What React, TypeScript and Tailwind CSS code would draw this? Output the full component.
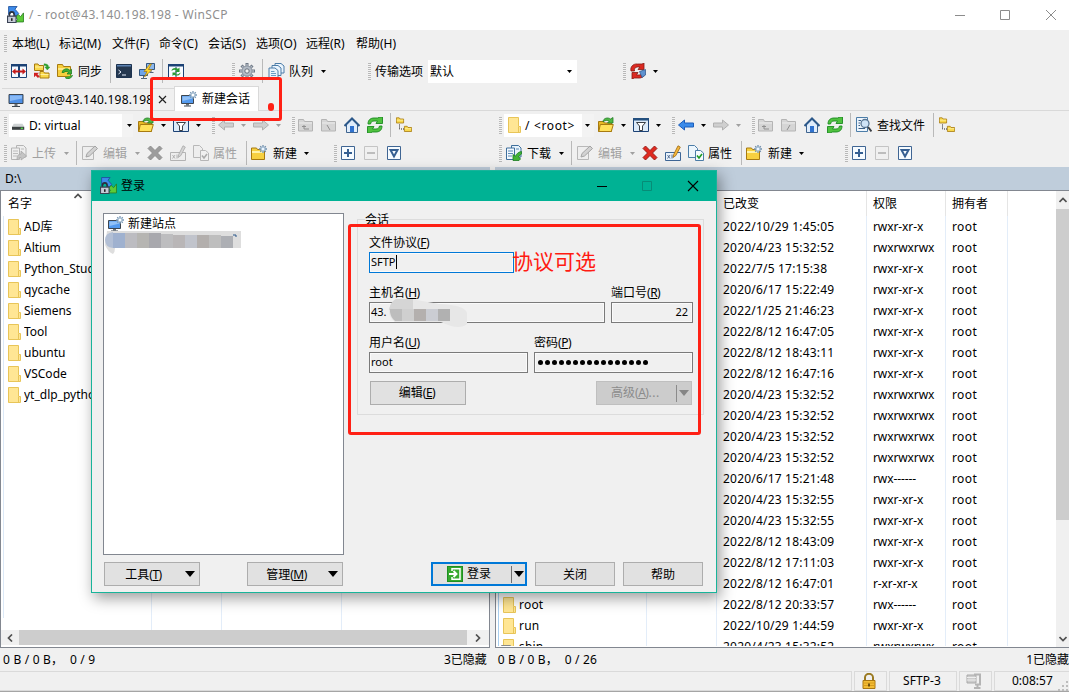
import React from 'react';

type P = { className?: string; children?: React.ReactNode };

const Svg = ({ children, className = '' }: P) => (
  <svg width="16" height="16" viewBox="0 0 16 16" fill="none" className={`shrink-0 ${className}`}>{children}</svg>
);

/* ---------- icons ---------- */
const AppIcon = () => (
  <Svg className="!h-[17px] !w-[17px]">
    <path d="M1.500 .5h8L7.500 3l3.500 4-2.500 2.500L5 5.500 1.500 8z" fill="#3d8bea" stroke="#1d4f9c" strokeWidth=".8" />
    <path d="M15.500 6.500v8.500H7.500l2.500-2.300L8 10.500 10.500 8l2.300 2z" fill="#5ccb37" stroke="#2b7f22" strokeWidth=".8" />
    <path d="M2.300 10V8a2.200 2.500 0 0 1 4.400 0v2" stroke="#2b313d" strokeWidth="1.500" />
    <path d="M.5 9.500h8v6h-8z" fill="#c5cad6" stroke="#3a4254" />
    <path d="M4.500 11.500v2.500" stroke="#222" strokeWidth="1.500" />
  </Svg>
);
const Panels = () => (
  <Svg><path d="M.5 1.500h7v13h-7zM8.500 1.500h7v13h-7z" fill="#f4f9ff" stroke="#1c4275" /><path d="M0 1h16v2.500H0z" fill="#1c4275" /><path d="M1 8.500l3.500-3v2h7v-2l3.500 3-3.500 3v-2h-7v2z" fill="#c41a1a" /></Svg>
);
const Fold = ({ x, y, s = 1 }: { x: number; y: number; s?: number }) => (
  <g transform={`translate(${x} ${y}) scale(${s})`}><path d="M.5 7.500v-6.500h3.500l1 1.500h4.500v5z" fill="#f9d84a" stroke="#a77a10" /><path d="M1 4h8" stroke="#fff0a0" /></g>
);
const SyncFolders = () => (
  <Svg><Fold x={0} y={0} /><Fold x={5.500} y={7.500} /><path d="M10 .8c3 0 4.500 1 4.500 3.200H16L13.300 7 10.800 4h1.600c0-1-.9-1.400-2.400-1.400z" fill="#2ea02e" stroke="#2ea02e" strokeWidth=".4" /><path d="M0 10h4.500L3.200 11.200l2.300 2-1.500 1.600-2.300-2.200L0 14z" fill="#d02020" stroke="#d02020" strokeWidth=".4" /></Svg>
);
const SyncBrowse = () => (
  <Svg><path d="M.5 13.500v-12h5l1 2h7v10z" fill="#f7cf3d" stroke="#a77a10" /><path d="M1 6h12" stroke="#fff0a0" strokeWidth="1.500" /><path d="M5 9.500a4.500 4.500 0 0 1 8-2l1.500-1.200V11h-4.500l1.500-1.500c-1.500-1.500-3.500-1.500-4.500 0zM15.500 12a4.500 4.500 0 0 1-7.500 2.500" fill="#3fae35" stroke="#1e7f22" strokeWidth=".8" /></Svg>
);
const Terminal = () => (
  <Svg><path d="M.5 1.500h15v13H.5z" fill="#253850" stroke="#1d3350" /><path d="M1 2h14v1.500H1z" fill="#5c82b2" /><path d="M2.500 7l2.500 2-2.500 2" stroke="#e9f1ff" /><path d="M6 12h4" stroke="#e9f1ff" /></Svg>
);
const Putty = () => (
  <Svg><path d="M7.500 .5h8v6h-8z" fill="#8bb7ee" stroke="#33577f" /><path d="M.5 6.500h8v6h-8z" fill="#6ca4ea" stroke="#33577f" /><path d="M4.500 13v2M2 15.500h6M12 7v2.500M10.500 9.500h4" stroke="#526579" /><path d="M11 1L5 8.500h3L5.500 14 13 6.500H9.500L12.500 1z" fill="#ffd62e" stroke="#a3770d" strokeWidth=".7" /></Svg>
);
const SyncWin = () => (
  <Svg><path d="M.5 1.500h15v14H.5z" fill="#f6faff" stroke="#1c4275" /><path d="M0 1h16v2.500H0z" fill="#1c4275" /><path d="M8 4v11" stroke="#1c4275" /><path d="M3.500 8c0-3 4-4 6.500-2.200L11.500 4.500v4.500H7l1.600-1.500C7 6.500 5.500 6.500 3.500 8zM12.500 9.500c0 3-4 4-6.500 2.200L4.500 13v-3.500H9L7.400 11c1.600 1 3 .5 5.100-1.500z" fill="#2a9a32" /></Svg>
);
const Gear = () => (
  <Svg><path d="M8 0v16M0 8h16M2.500 2.500l11 11M13.500 2.500l-11 11" stroke="#6f7986" strokeWidth="3" /><path d="M8 1v14M1 8h14M3.200 3.200l9.600 9.600M12.800 3.200l-9.600 9.600" stroke="#b4bcc6" strokeWidth="1.400" /><circle cx="8" cy="8" r="5" fill="#b4bcc6" stroke="#8e97a3" /><circle cx="8" cy="8" r="2.200" fill="#f0f0f0" stroke="#68717d" /></Svg>
);
const Queue = () => (
  <Svg className="!w-[17px]"><path d="M6.500.5h6l3 2.500v7h-9z" fill="#eaf4fd" stroke="#4c7da8" /><path d="M3.500 2.500h6l3 2.500v7.500h-9z" fill="#eaf4fd" stroke="#4c7da8" /><path d="M.5 5h6l3 2.500v8h-9z" fill="#e8f3fc" stroke="#4c7da8" /><path d="M2.500 8.500H6M2.500 10.500h5M2.500 12.500h5" stroke="#6a9cc4" /></Svg>
);
const RedSync = () => (
  <Svg><path d="M1 8C0 4 3 .5 7.500 1H12l2-1v6.500H8l2-2.500H7.500C5 4 4 6 4.500 8z" fill="#dc2a22" stroke="#851a14" strokeWidth=".8" /><path d="M14.500 9c.5 4-2.500 6.500-6.500 6H4.500L2 16V9.500h6L6.500 12H9c2 0 3-1 3-3z" fill="#dc2a22" stroke="#851a14" strokeWidth=".8" /><path d="M9.500 8.500l6-2v5.500l-3.500 2.500z" fill="#5d91cf" stroke="#294f84" strokeWidth=".7" /></Svg>
);
const Monitor = () => (
  <Svg><path d="M1 2.500h14v9H1z" fill="#4d8fe6" stroke="#3d4650" /><path d="M2 3.500h12v3L2 9z" fill="#88b9f6" /><path d="M6.500 12h3v2h-3z" fill="#687078" /><path d="M4 14.500h8" stroke="#3d4650" /></Svg>
);
const MonitorNew = () => (
  <Svg><path d="M.5 4.500h12v8H.5z" fill="#549aee" stroke="#3d4650" /><path d="M1.500 5.500h10v2L1.500 10z" fill="#91c1f7" /><path d="M5 13h3v1.500H5z" fill="#687078" /><path d="M3 15h7" stroke="#3d4650" /><path d="M12 0v8M8 4h8M9.200 1.200l5.600 5.600M14.800 1.200L9.200 6.800" stroke="#7a98b5" strokeWidth="1.300" /><circle cx="12" cy="4" r="2" fill="#fff" stroke="#9db8d0" /></Svg>
);
const Drive = () => (
  <Svg className="!w-[14px]"><path d="M2 6.500h10l2 3.500H0z" fill="#cfd3d4" /><path d="M0 10h14v3.500H0z" fill="#3b4041" /><path d="M10 11h2.500v1.500H10z" fill="#55e04a" /></Svg>
);
const OpenFolder = () => (
  <Svg><path d="M.5 14.500V4.500h5l1 1.500h7v8.500z" fill="#e8b923" stroke="#a77a10" /><path d="M.8 14.500l1.500-7h13l-2 7z" fill="#ffe15a" stroke="#a77a10" /><path d="M5 5C5 1 10 0 12.500 2L15 .5V6H9.500l1.700-1.700C9.500 3 7 3 5 5z" fill="#4fb844" stroke="#247d28" strokeWidth=".8" /></Svg>
);
const Filter = () => (
  <Svg><path d="M.5 1.500h15v13H.5z" fill="#dceaf8" stroke="#1c4275" /><path d="M0 1h16v2.500H0z" fill="#24507f" /><path d="M3.500 5.500h9L9.500 9v4.500h-3V9z" fill="#fff" stroke="#3a3f45" /></Svg>
);
const Arrow = ({ c, right = false }: { c: string; right?: boolean }) => (
  <Svg className={right ? 'rotate-180' : ''}><path d="M.5 8l6-5v3h9v4h-9v3z" fill={c} stroke={c === '#cfcfcf' ? '#b0b0b0' : '#1d5ebb'} /></Svg>
);
const GrayFolder = ({ d }: { d: string }) => (
  <Svg><path d="M.5 14V2.500h5l1 2h8V14z" fill="#d5d5d5" stroke="#b4b4b4" /><path d="M1 6h13" stroke="#ececec" /><path d={d} stroke="#8f8f8f" /></Svg>
);
const Home = () => (
  <Svg><path d="M2.500 7v8.500h11V7L8 2z" fill="#e0edfc" stroke="#3f648f" /><path d="M.5 9L8 1.500 15.500 9" stroke="#2c588a" strokeWidth="2" /><path d="M6 9h4v6H6z" fill="#2f72cf" /></Svg>
);
const Refresh = () => (
  <Svg><path d="M1 7C1 2.500 4 1 7 1h3.500L13 0h2.500v6.500H9L10.500 4H7C5 4 4 5 3.500 7zM15 9c0 4.500-3 6-6 6H5.500L3 16H.5V9.500H7L5.500 12H9c2 0 3-1 3.500-3z" fill="#4fc13f" stroke="#1c8a22" strokeWidth=".9" /></Svg>
);
const Tree = () => (
  <Svg><Fold x={0} y={0} s={0.8} /><Fold x={8} y={8.500} s={0.8} /><path d="M3.500 7.500V12H8" stroke="#222" strokeDasharray="1 1" /></Svg>
);
const Find = () => (
  <Svg><path d="M.5.5h11v14H.5z" fill="#edf5fd" stroke="#4c7da8" /><path d="M2.500 3.500H5M2.500 6H4M2.500 8.500H4M2.500 11.500H9" stroke="#3a5f88" /><circle cx="9" cy="6.500" r="4" fill="#cfe3f7" stroke="#5a7693" strokeWidth="1.300" /><path d="M12 10l3.500 4.500" stroke="#3b3f45" strokeWidth="2" /></Svg>
);
const Transfer = ({ on = false }: { on?: boolean }) => (
  <Svg><path d="M5.500.5h7l2.500 2.500v9H5.500z" fill={on ? '#e8f3fc' : '#eee'} stroke={on ? '#3e6f9c' : '#b4b4b4'} /><path d="M.5 3h8v11.500h-8z" fill={on ? '#f2f8fe' : '#eee'} stroke={on ? '#3e6f9c' : '#b4b4b4'} /><path d="M2 6h5M2 8.500h5M2 11h4M10 4h3" stroke={on ? '#5a8ab4' : '#bcbcbc'} /><path d={on ? 'M15.500 6.500v2.500l-3 2.500 2 2.500-1.500 1.500H7V9.500l2.300 1.800c1.200-2.500 3-4.300 6.200-4.800z' : 'M6 15c0-4 1-6 4-6V6l5.500 5-5.500 4v-2.500c-2 0-3 1-4 2.500z'} fill={on ? '#42b435' : '#c4c4c4'} stroke={on ? '#1b7e22' : '#a8a8a8'} strokeWidth=".8" /></Svg>
);
const Edit = () => (
  <Svg><path d="M.5 1.500h11v13H.5z" fill="#eee" stroke="#b8b8b8" /><path d="M4 12l1-3.500L13 1l2.500 2.500L7.500 11z" fill="#d2d2d2" stroke="#a4a4a4" /></Svg>
);
const Cross = ({ on = false }: { on?: boolean }) => (
  <Svg><path d="M1 3.500L3.500 1 8 5.500 12.500 1 15 3.500 10.500 8 15 12.500 12.500 15 8 10.500 3.500 15 1 12.500 5.500 8z" fill={on ? '#e02a20' : '#9c9c9c'} stroke={on ? '#8e1712' : '#8a8a8a'} strokeWidth=".9" /></Svg>
);
const Rename = ({ on = false }: { on?: boolean }) => (
  <Svg><path d="M.5 7.500h15v8H.5z" fill={on ? '#e8f2fc' : '#eee'} stroke={on ? '#3e6696' : '#b4b4b4'} /><path d="M2.500 10l2.500 3.500M5 10l-2.500 3.500M7 9.500v4" stroke={on ? '#3a5680' : '#a4a4a4'} strokeWidth=".8" /><path d="M8 12.500l.7-3L13 .8l2.300 1.300-4.500 8.500z" fill={on ? '#f6b93b' : '#d4d4d4'} stroke={on ? '#9b6712' : '#a8a8a8'} strokeWidth=".8" /></Svg>
);
const Props = ({ on = false }: { on?: boolean }) => (
  <Svg><path d="M.5.500h6l3 3v9h-9z" fill={on ? '#edf6fd' : '#eee'} stroke={on ? '#4c7da8' : '#b8b8b8'} /><path d="M7.500 5.500h5l3 2.500v7.500h-8z" fill={on ? '#f7fbff' : '#f0f0f0'} stroke={on ? '#4c7da8' : '#b8b8b8'} /><path d="M9 10.500l2 2.500 3-4" stroke={on ? '#1d9a25' : '#ababab'} strokeWidth="1.600" /></Svg>
);
const NewFolder = () => (
  <Svg><path d="M.5 14.500V3h5l1 1.500h7v10z" fill="#f7d040" stroke="#a77a10" /><path d="M1 7h12" stroke="#fff3a8" strokeWidth="2" /><path d="M12 0v8M8 4h8M9.200 1.200l5.600 5.600M14.800 1.200L9.200 6.800" stroke="#6f8ead" strokeWidth="1.300" /><circle cx="12" cy="4" r="2" fill="#eef7ff" stroke="#9db8d0" /></Svg>
);
const Box = ({ d, off = false }: { d: string; off?: boolean }) => (
  <svg width="14" height="14" viewBox="0 0 14 14" fill="none" className="shrink-0"><path d="M.5.500h13v13H.5z" fill={off ? '#f0f0f0' : '#f6fbff'} stroke={off ? '#c4c4c4' : '#3f6593'} /><path d={d} stroke={off ? '#bdbdbd' : '#355f92'} strokeWidth="2" /></svg>
);
const Folder = ({ link = false }: { link?: boolean }) => (
  <svg width="13" height="16" viewBox="0 0 13 16" className="shrink-0 overflow-visible"><path d="M.5.500h10v9h2v6H.5z" fill="#ffe694" stroke="#e8c558" /><path d="M10.500 10v5.500" stroke="#e8c558" />{link && <path d="M-1.500 6.500h9v9h-9z" fill="#fff" stroke="#8a8a8a" />}</svg>
);
const Padlock = () => (
  <svg width="14" height="16" viewBox="0 0 14 16" fill="none"><path d="M3 7.500V4.500a4 3.700 0 0 1 8 0v3" stroke="#9a7a22" strokeWidth="2" /><path d="M1 7.500h12v8H1z" fill="#f3bd35" stroke="#a87611" /><path d="M1.500 10h11M1.500 12.500h11" stroke="#d99c1c" /><path d="M7 10.500v3" stroke="#4b3505" strokeWidth="1.500" /></svg>
);
const Clamp = () => (
  <Svg><path d="M1 2h9v8H1z" fill="#ccc" stroke="#aaa" /><path d="M1 4.500h9M1 7h9" stroke="#eee" /><path d="M8 1.500h6v10H9M11.500 11v3.500M8 15h6.500" stroke="#b4b4b4" strokeWidth="2" /></Svg>
);
const LoginIcon = () => (
  <Svg><path d="M0 0h16v16H0z" fill="#1e8f22" /><path d="M1 1h14v14H1z" fill="#37a92e" /><path d="M5 5V2.800h8v10.400H5V11" stroke="#fff" strokeWidth="1.500" /><path d="M2 8h7M6.500 5L9.500 8l-3 3" stroke="#fff" strokeWidth="1.900" /></Svg>
);

/* ---------- small parts ---------- */
const C = ({ className = '', children }: P) => <span className={`flex h-full shrink-0 items-center whitespace-nowrap ${className}`}>{children}</span>;
const Grip = ({ className = '' }: P) => (
  <C className={className}><span className="h-[17px] w-[3px] bg-[repeating-linear-gradient(#b8b8b8_0px,#b8b8b8_1px,#f4f4f4_1px,#f4f4f4_2px)]" /></C>
);
const Sep = ({ className = '' }: P) => <C className={className}><span className="h-[24px] w-px bg-[#b9b9b9]" /></C>;
const Caret = ({ className = '', off = false }: { className?: string; off?: boolean }) => (
  <C className={className}><svg width="5" height="3" viewBox="0 0 5 3"><path d="M0 0h5L2.500 3z" fill={off ? '#a0a0a0' : '#000'} /></svg></C>
);
const Chevron = ({ className = '' }: P) => (
  <svg width="8" height="6" viewBox="0 0 8 6" fill="none" className={`shrink-0 ${className}`}><path d="M.5 5L4 1.500 7.500 5" stroke="#505050" strokeWidth="1.700" /></svg>
);

const NavBar = ({ remote = false }: { remote?: boolean }) => (
  <div className={`flex h-7 items-center pl-1 ${remote ? 'w-[574px]' : 'w-[495px]'}`}>
    <Grip className="w-[5px]" />
    {remote ? (
      <C className="!h-[23px] mr-[4px] w-[90px] bg-white">
        <C className="w-[21px] pl-1"><Folder /></C>
        <C className="w-[57px] pt-px tracking-[0.65px]">/ &lt;root&gt;</C>
        <Caret className="w-[12px] bg-[#f3f3f3] pl-[3px]" />
      </C>
    ) : (
      <C className="!h-[23px] mr-[5px] w-[124px] bg-white">
        <C className="w-[20px] pl-[3px]"><Drive /></C>
        <C className="w-[93px] pt-px tracking-[0.1px]">D: virtual</C>
        <Caret className="w-[11px] bg-[#f3f3f3] pl-[5px]" />
      </C>
    )}
    <C className="w-[23px]"><OpenFolder /></C>
    <Caret className="w-[12px]" />
    <C className="w-[23px]"><Filter /></C>
    <Caret className="w-[16px]" />
    <Grip className="w-[6px]" />
    <C className="w-[23px]"><Arrow c={remote ? '#3b8bea' : '#cfcfcf'} /></C>
    <Caret className="w-[12px]" off={!remote} />
    <C className="w-[23px]"><Arrow c="#cfcfcf" right /></C>
    <Caret className="w-[16px]" off />
    <Grip className="w-[6px]" />
    <C className="w-[23px]"><GrayFolder d="M4 9.500h4M6 8v4h5" /></C>
    <C className="w-[23px]"><GrayFolder d={remote ? 'M9 8l-3 5' : 'M6 8l3 5'} /></C>
    <C className="w-[23px]"><Home /></C>
    <C className="w-[23px]"><Refresh /></C>
    <Sep className="w-[6px]" />
    {remote && <><C className="w-[21px]"><Find /></C><C className="w-[56px] pt-px">查找文件</C><Sep className="w-[6px]" /></>}
    <C><Tree /></C>
  </div>
);

const FileBar = ({ remote = false }: { remote?: boolean }) => (
  <div className={`flex h-7 items-center pl-1 ${remote ? 'w-[574px]' : 'w-[495px] text-[#a0a0a0]'}`}>
    <Grip className="w-[7px]" />
    <C className="w-[21px]"><Transfer on={remote} /></C>
    <C className="w-[32px] pt-px">{remote ? '下载' : '上传'}</C>
    <Caret className="w-[12px]" off={!remote} />
    <Sep className="w-[6px]" />
    <C className="w-[21px]"><Edit /></C>
    <C className="w-[32px] pt-px text-[#a0a0a0]">编辑</C>
    <Caret className="w-[12px]" off />
    <C className="w-[23px]"><Cross on={remote} /></C>
    <C className="w-[23px]"><Rename on={remote} /></C>
    <C className="w-[20px]"><Props on={remote} /></C>
    <C className="w-[33px] pt-px">属性</C>
    <Sep className="w-[5px]" />
    <C className="w-[22px]"><NewFolder /></C>
    <C className="w-[31px] pt-px text-black">新建</C>
    <Caret className={remote ? 'w-[46px]' : 'w-[30px]'} />
    <Grip className="w-[7px]" />
    <C className="w-[23px]"><Box d="M3 7h8M7 3v8" /></C>
    <C className="w-[23px]"><Box off d="M3 7h8" /></C>
    <C><Box d="M3.500 4h7L7 10.500z" /></C>
  </div>
);

const local = ['AD库', 'Altium', 'Python_Studio', 'qycache', 'Siemens', 'Tool', 'ubuntu', 'VSCode', 'yt_dlp_python'];
const remote: [string, string, string][] = [
  ['', '2022/10/29 1:45:05', 'rwxr-xr-x'], ['', '2020/4/23 15:32:52', 'rwxrwxrwx'], ['', '2022/7/5 17:15:38', 'rwxr-xr-x'],
  ['', '2020/6/17 15:22:49', 'rwxr-xr-x'], ['', '2022/1/25 21:46:23', 'rwxr-xr-x'], ['', '2022/8/12 16:47:05', 'rwxr-xr-x'],
  ['', '2022/8/12 18:43:11', 'rwxr-xr-x'], ['', '2022/8/12 16:47:16', 'rwxr-xr-x'], ['', '2020/4/23 15:32:52', 'rwxrwxrwx'],
  ['', '2020/4/23 15:32:52', 'rwxrwxrwx'], ['', '2020/4/23 15:32:52', 'rwxrwxrwx'], ['', '2020/4/23 15:32:52', 'rwxrwxrwx'],
  ['', '2020/6/17 15:21:48', 'rwx------'], ['', '2020/4/23 15:32:55', 'rwxr-xr-x'], ['', '2020/4/23 15:32:55', 'rwxr-xr-x'],
  ['', '2022/8/12 18:43:09', 'rwxr-xr-x'], ['', '2022/8/12 17:11:03', 'rwxr-xr-x'], ['', '2022/8/12 16:47:01', 'r-xr-xr-x'],
  ['root', '2022/8/12 20:33:57', 'rwx------'], ['run', '2022/10/29 1:44:59', 'rwxr-xr-x'], ['sbin', '2020/4/23 15:32:52', 'rwxrwxrwx'],
];
const Col = ({ className = '' }: P) => <div className={`h-full shrink-0 border-r border-[#e3edf9] ${className}`} />;

const Key = ({ k }: { k: string }) => <span className="tracking-[-0.5px]">(<u className="underline-offset-1">{k}</u>)</span>;
const Field = ({ label, k, className = '', children }: P & { label: string; k: string }) => (
  <div className={`flex flex-col ${className}`}>
    <div className="flex h-5 items-center whitespace-nowrap pt-px">{label}<Key k={k} /></div>
    {children}
  </div>
);
const Input = ({ className = '', children }: P) => (
  <div className={`flex h-[21px] items-center border bg-[#f0f0f0] px-px pb-px text-[11px] shadow-[inset_0_0_0_1px_#fafafa] ${className || 'border-[#7a7a7a]'}`}>{children}</div>
);
const Btn = ({ className = '', children }: P) => (
  <button className={`flex h-6 shrink-0 items-center justify-center whitespace-nowrap border border-[#adadad] bg-[#e1e1e1] ${className}`}>{children}</button>
);
const BigCaret = ({ color = '#000' }: { color?: string }) => <svg width="10" height="6" viewBox="0 0 10 6"><path d="M0 0h10L5 6z" fill={color} /></svg>;

const Dialog = () => (
  <div className="absolute left-[91px] top-[170px] flex h-[423px] w-[626px] flex-col border border-[#18b49a] bg-[#f0f0f0] shadow-[3px_5px_14px_rgba(0,0,0,0.4)]">
    <div className="flex h-[30px] shrink-0 items-center bg-[#00b294] pb-px pl-2">
      <AppIcon />
      <span className="ml-[4px] flex-1">登录</span>
      <svg width="120" height="14" viewBox="0 0 120 14" fill="none" className="mr-[4px]">
        <path d="M5 7.500h10" stroke="#000" /><path d="M50.500 2.500h9v9h-9z" stroke="#078c77" /><path d="M96 2l10 10M106 2L96 12" stroke="#000" strokeWidth="1.100" />
      </svg>
    </div>
    <div className="flex h-[354px] shrink-0 pl-[11px] pt-[12px]">
      <div className="h-[342px] w-[241px] shrink-0 border border-[#828790] bg-white pl-[1px] pt-px">
        <div className="flex h-[18px] items-center pl-[3px]"><MonitorNew /><span className="ml-1">新建站点</span></div>
        <svg width="138" height="25" viewBox="0 0 138 25" className="-mt-[2px]">
          <path d="M2 0h134v17H10q0 4-2 6-5-2-8-9z" fill="#dedede" />
          <path d="M8 1Q0 2 0 9t8 8z" fill="#b2bfd5" />
          <path d="M8 2h12v15H8z" fill="#9fb1cf" /><path d="M20 2h12v15H20z" fill="#bcbcc1" /><path d="M32 2h12v15H32z" fill="#b6b5b2" />
          <path d="M44 2h12v15H44z" fill="#a8a8ad" /><path d="M56 3h12v14H56z" fill="#bdbdbf" /><path d="M68 4h12v13H68z" fill="#b9b6b7" />
          <path d="M80 4h12v13H80z" fill="#c1c4cc" /><path d="M92 4h12v13H92z" fill="#b3afad" /><path d="M104 4h12v13h-12z" fill="#bebebe" /><path d="M116 5h12v12h-12z" fill="#adafb4" />
          <path d="M128 4h3v2" fill="none" stroke="#28568a" />
        </svg>
      </div>
      <fieldset className="ml-[13px] h-[202px] w-[347px] border border-[#dcdcdc] pl-[11px]">
        <legend className="ml-[-4px] h-[13px] leading-[14px]">会话</legend>
        <Field label="文件协议" k="F" className="mt-[6px]">
          <div className="flex items-center">
            <Input className="w-[145px] border-[#0078d7]">SFTP<span className="h-[14px] w-px bg-black" /></Input>
            <span className="-ml-[2px] h-[21px] whitespace-nowrap text-[21px] leading-[19px] text-[#ff1b12]">协议可选</span>
          </div>
        </Field>
        <div className="mt-[9px] flex gap-[6px]">
          <Field label="主机名" k="H" className="w-[236px]">
            <Input>43.<svg width="84" height="29" viewBox="0 0 84 29" className="-ml-px mt-[2px]"><path d="M10 0h15l28 5q26 1 28 9v11q-8 7-26-2H9Q2 18 3 9z" fill="#e7e7e7" /><path d="M10 0h17v11H3Q4 3 10 0z" fill="#d5d5d5" /><path d="M4 10h12v12H9q-4-3-5-9z" fill="#bdbdbd" /><path d="M16 10h12v12H16z" fill="#cfcfcf" /><path d="M28 10h12v12H28z" fill="#b4b0ae" /><path d="M40 10h12v12H40z" fill="#cbcdd3" /><path d="M52 10h12v12H52z" fill="#b1b1b1" /></svg></Input>
          </Field>
          <Field label="端口号" k="R" className="w-[82px]"><Input className="justify-end border-[#7a7a7a] pr-1">22</Input></Field>
        </div>
        <div className="mt-[9px] flex gap-[6px]">
          <Field label="用户名" k="U" className="w-[159px]"><Input>root</Input></Field>
          <Field label="密码" k="P" className="w-[159px]">
            <Input>
              <span className="flex gap-[2px] pl-[2px] pt-px">{Array.from({ length: 16 }, (_, i) => <i key={i} className="h-[5px] w-[5px] rounded-full bg-black" />)}</span>
            </Input>
          </Field>
        </div>
        <div className="mt-[8px] flex w-[323px] justify-between pl-px">
          <Btn className="w-[96px]"><span className="pr-[2px]">编辑<Key k="E" /></span></Btn>
          <Btn className="w-[96px] !border-[#bfbfbf] !bg-[#cccccc] text-[#8b8b8b]">
            <span className="flex-1 pr-[2px]">高级<Key k="A" /><span className="tracking-[0.6px]">...</span></span><span className="mr-[2px] h-[17px] w-px bg-[#8b8b8b]" /><BigCaret color="#858585" /><span className="w-[2px]" />
          </Btn>
        </div>
      </fieldset>
    </div>
    <div className="flex pl-[12px] pt-[7px]">
      <Btn className="w-[96px]"><span className="flex-1 pr-[3px] pt-px">工具<Key k="T" /></span><BigCaret /><span className="w-1" /></Btn>
      <Btn className="ml-[47px] w-[96px]"><span className="flex-1 pr-[3px] pt-px">管理<Key k="M" /></span><BigCaret /><span className="w-1" /></Btn>
      <Btn className="ml-[88px] w-[96px] !justify-start !border-2 !border-[#0078d7] pl-[14px]"><LoginIcon /><span className="ml-[4px] w-[44px] text-left">登录</span><span className="mr-[2px] h-[17px] w-px bg-[#707070]" /><BigCaret /></Btn>
      <Btn className="ml-[8px] w-[80px] pt-px">关闭</Btn>
      <Btn className="ml-[8px] w-[80px] pt-px">帮助</Btn>
    </div>
  </div>
);

export default function App() {
  return (
    <div className="relative flex h-[692px] w-[1069px] cursor-default flex-col overflow-hidden bg-[#f0f0f0] font-['Noto_Sans','Noto_Sans_CJK_SC',sans-serif] text-[12px] leading-[16px] text-black">
      <header className="flex h-[30px] shrink-0 items-center bg-white pb-px pl-[7px] text-[#8f8f8f]">
        <AppIcon />
        <span className="ml-[5px] flex-1 tracking-[0.36px]">/ - root@43.140.198.198 - WinSCP</span>
        <svg width="130" height="14" viewBox="0 0 130 14" fill="none" className="mr-[3px]"><path d="M19 7.500h10M64.500 2.500h9v9h-9zM110 2l10 10M120 2l-10 10" stroke="#8c8c8c" /></svg>
      </header>

      <nav className="flex h-[27px] shrink-0 items-center pl-1">
        <Grip className="w-[8px]" />
        <C className="w-[47px]">本地(L)</C><C className="w-[53px]">标记(M)</C><C className="w-[47px]">文件(F)</C><C className="w-[49px]">命令(C)</C>
        <C className="w-[48px]">会话(S)</C><C className="w-[50px]">选项(O)</C><C className="w-[50px]">远程(R)</C><C>帮助(H)</C>
      </nav>

      <div className="flex h-[28px] shrink-0 items-center pl-1">
        <Grip className="w-[7px]" />
        <C className="w-[23px]"><Panels /></C><C className="w-[23px]"><SyncFolders /></C><C className="w-[21px]"><SyncBrowse /></C><C className="w-[32px] pt-px">同步</C>
        <Sep className="w-[6px]" />
        <C className="w-[23px]"><Terminal /></C><C className="w-[23px]"><Putty /></C>
        <Sep className="w-[6px]" />
        <C className="w-[64px]"><SyncWin /></C>
        <Grip className="w-[7px]" /><C className="w-[23px]"><Gear /></C>
        <Sep className="w-[6px]" />
        <C className="w-[21px]"><Queue /></C><C className="w-[32px] pt-px">队列</C><Caret className="w-[47px]" />
        <Grip className="w-[7px]" /><C className="w-[53px] pt-px">传输选项</C>
        <C className="!h-[23px] w-[195px]"><C className="w-[139px] bg-white pl-[2px] pt-px">默认</C><Caret className="w-[10px] bg-white" /></C>
        <Grip className="w-[7px]" /><C className="w-[23px]"><RedSync /></C><Caret />
      </div>

      <div className="flex h-[26px] shrink-0 items-end">
        <div className="w-[2px] self-stretch border-b border-[#d9d9d9]" />
        <div className="flex h-[23px] w-[172px] items-center border-b border-t border-[#d9d9d9] pl-[6px]">
          <Monitor /><span className="ml-[6px] w-[122px] overflow-hidden whitespace-nowrap tracking-[0.2px]">root@43.140.198.198</span>
          <svg width="9" height="9" viewBox="0 0 9 9" className="ml-[6px]"><path d="M1 1l7 7M8 1L1 8" stroke="#222" strokeWidth="1.200" /></svg>
        </div>
        <div className="flex h-[25px] w-[85px] items-center border border-b-0 border-[#d9d9d9] bg-white pl-[6px]"><MonitorNew /><span className="ml-[5px]">新建会话</span></div>
        <div className="flex-1 self-stretch border-b border-[#d9d9d9]" />
      </div>

      <div className="flex shrink-0"><NavBar /><NavBar remote /></div>
      <div className="flex shrink-0"><FileBar /><FileBar remote /></div>

      <div className="flex h-[23px] shrink-0 gap-[5px]">
        <div className="flex w-[490px] items-center bg-[#bfcddb] pl-[5px]">D:\</div>
        <div className="flex-1 bg-[#bfcddb]" />
      </div>

      <main className="flex h-[458px] shrink-0 gap-[5px]">
        <section className="flex w-[490px] flex-col overflow-hidden border border-[#828790] bg-white">
          <div className="flex h-[25px] shrink-0 items-center pl-[7px]">名字<Chevron className="mb-4 ml-[42px]" /></div>
          <div className="flex h-[414px]">
            <div className="h-full w-[151px] shrink-0 border-r border-[#e3edf9]">
              <div className="ml-[2px] h-[402px] border-l border-[#dce9f7]">
                {local.map((n) => <div key={n} className="flex h-[21px] items-center gap-[3px] pl-[4px]"><Folder /><span className="w-[69px] overflow-hidden whitespace-nowrap">{n}</span></div>)}
              </div>
            </div>
            <Col className="w-[70px]" /><Col className="w-[120px]" />
          </div>
          <div className="flex h-[15px] shrink-0 items-center bg-[#f0f0f0]">
            <span className="flex w-[18px] shrink-0 justify-center"><Chevron className="-rotate-90" /></span><span className="h-full w-[448px] shrink-0 bg-[#cdcdcd]" /><span className="flex flex-1 justify-center"><Chevron className="rotate-90" /></span>
          </div>
        </section>
        <section className="flex w-[574px] overflow-hidden border border-r-0 border-[#828790] bg-white">
          <div className="flex h-full w-[560px] flex-col">
            <div className="flex h-[25px] shrink-0 items-center">
              <Col className="w-[151px]" /><Col className="w-[70px]" />
              <C className="w-[150px] border-r border-[#e5e5e5] pl-[6px]">已改变</C><C className="w-[79px] border-r border-[#e5e5e5] pl-[6px]">权限</C><C className="w-[62px] border-r border-[#e5e5e5] pl-[6px]">拥有者</C>
            </div>
            <div className="h-[430px] overflow-hidden">
              {remote.map(([name, date, perm], i) => (
                <div key={i} className="flex h-[21px] items-center tracking-[0.2px]">
                  <C className="ml-[2px] w-[149px] gap-[3px] border-l border-r border-l-[#a9cfef] border-r-[#e3edf9] pl-[4px]">{name && <><Folder link={name === 'sbin'} />{name}</>}</C>
                  <Col className="w-[70px]" />
                  <C className="w-[150px] border-r border-[#e3edf9] pl-[6px]">{date}</C>
                  <C className="w-[79px] border-r border-[#e3edf9] pl-[6px] tracking-[-0.1px]">{perm}</C>
                  <C className="w-[62px] border-r border-[#e3edf9] pl-[6px] tracking-[0.4px]">root</C>
                </div>
              ))}
            </div>
          </div>
          <div className="flex w-[13px] flex-col items-center bg-[#f0f0f0]">
            <span className="flex h-[18px] items-center"><Chevron /></span><span className="h-[311px] w-full bg-[#cdcdcd]" /><span className="flex flex-1 items-end pb-[5px]"><Chevron className="rotate-180" /></span>
          </div>
        </section>
      </main>

      <div className="flex h-[23px] shrink-0 items-center whitespace-nowrap">
        <span className="w-[444px] flex-none whitespace-pre pl-[3px] tracking-[0.2px]">0 B / 0 B，  0 / 9</span>
        <span className="w-[54px]">3已隐藏</span>
        <span className="w-[531px] whitespace-pre tracking-[0.2px]">0 B / 0 B，  0 / 26</span>
        <span>1已隐藏</span>
      </div>
      <footer className="flex h-[21px] shrink-0 gap-[2px] border-b border-[#a5a5a5]">
        <span className="w-[852px] border border-l-0 border-[#dadada]" />
        <span className="flex w-[33px] items-center justify-center border border-[#dadada] pr-[3px]"><Padlock /></span>
        <span className="flex w-[68px] items-center justify-center border border-[#dadada] pr-[2px] tracking-[0.1px]">SFTP-3</span>
        <span className="flex w-[33px] items-center justify-center border border-[#dadada] pr-[3px]"><Clamp /></span>
        <span className="flex flex-1 items-center border border-r-0 border-[#dadada] pl-[17px]">0:08:57
          <svg width="11" height="11" viewBox="0 0 11 11" className="ml-auto mt-2"><path d="M8 1h2v2H8zM4 5h2v2H4zM8 5h2v2H8zM0 9h2v2H0zM4 9h2v2H4zM8 9h2v2H8z" fill="#bdbdbd" /></svg>
        </span>
      </footer>

      <Dialog />

      <div className="absolute left-[150px] top-[77px] h-[44px] w-[132px] rounded-[3px] border-[3px] border-[#ff2015]" />
      <div className="absolute left-[268px] top-[103px] h-[8px] w-[6px] rounded-[3px] bg-[#ff2015]" />
      <div className="absolute left-[348px] top-[224px] h-[211px] w-[353px] rounded-[3px] border-[3px] border-[#ff2015]" />
    </div>
  );
}
